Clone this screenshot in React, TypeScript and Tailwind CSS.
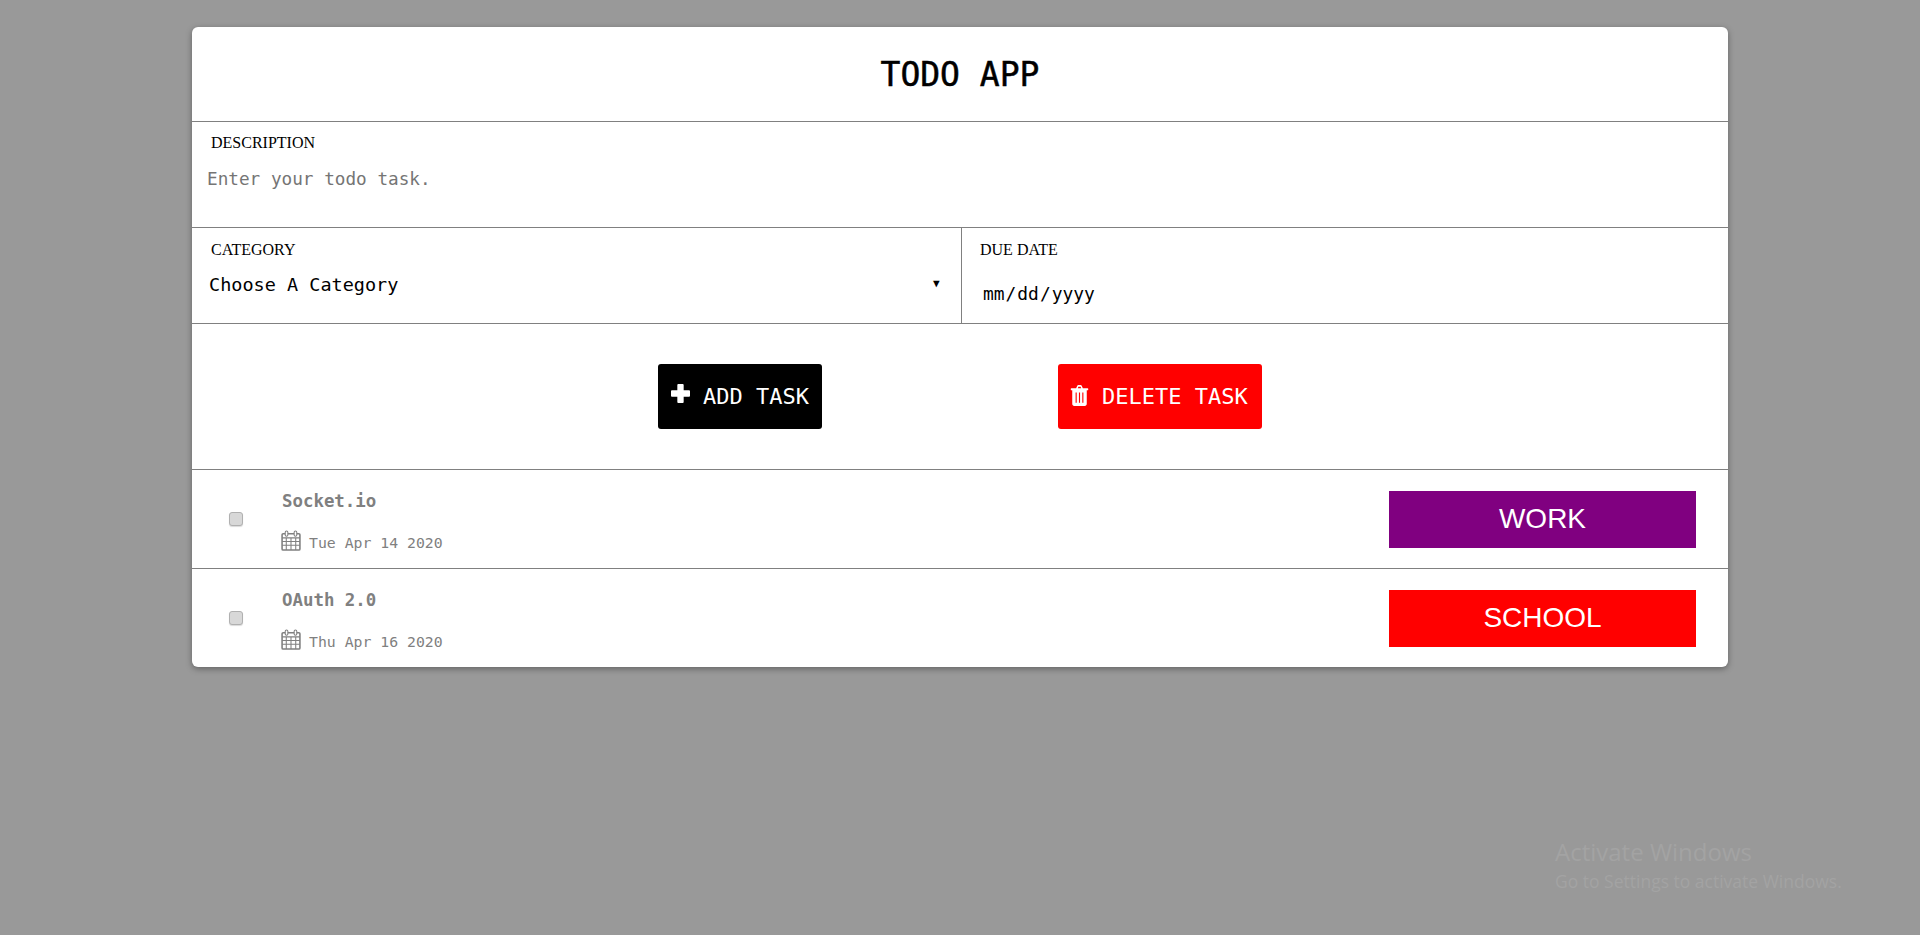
import React from "react";

function Plus() {
  return (
    <svg viewBox="0.8 0.8 14.4 14.4" className="w-[19px] h-[19px] shrink-0 mb-[6px]" fill="#fff">
      <path d="M6.300.8h3.400a.7.7 0 0 1 .7.7V5.600h4.100a.7.7 0 0 1 .7.7v3.400a.7.7 0 0 1-.7.7h-4.100v4.100a.7.7 0 0 1-.7.7H6.300a.7.7 0 0 1-.7-.7v-4.100H1.500a.7.7 0 0 1-.7-.7V6.300a.7.7 0 0 1 .7-.7h4.100V1.500A.7.7 0 0 1 6.300.8z" />
    </svg>
  );
}

function Trash() {
  return (
    <svg viewBox="0.2 0.7 15.6 18.8" className="w-[19px] h-[21px] shrink-0 mb-[2px]" fill="#fff">
      <path fillRule="evenodd" d="M5 3.500 6 1.300C6.200.9 6.500.7 7 .7h2c.5 0 .8.2 1 .6l1 2.200h4.300c.3 0 .5.2.5.5v1c0 .3-.2.5-.5.5H14.500V17.500c0 1.200-.8 2-1.700 2H3.200c-.9 0-1.700-.8-1.700-2V5.500H.7c-.3 0-.5-.2-.5-.5V4c0-.3.2-.5.500-.5zM6.500 3.500h3L9 2.200H7zM4.500 7.500v9h1v-9zM7.500 7.500v9h1v-9zM10.500 7.500v9h1v-9z" />
    </svg>
  );
}

function Calendar() {
  return (
    <svg viewBox="0 0 19 20" className="w-[20px] h-[21px] shrink-0 -ml-[1px] -mt-[1px]" fill="none" stroke="#808080">
      <rect x="1" y="3.500" width="17" height="15.500" rx="1" strokeWidth="1.500" />
      <path d="M1 7.500h17M1 11h17M1 14.500h17M5 7.500V19M9.500 7.500V19M14 7.500V19" strokeWidth="1" />
      <rect x="4" y="1" width="2.500" height="5" rx="1.200" fill="#ffffff" strokeWidth="1" />
      <rect x="12.500" y="1" width="2.500" height="5" rx="1.200" fill="#ffffff" strokeWidth="1" />
    </svg>
  );
}

function Task({ title, date, tag, color }: { title: string; date: string; tag: string; color: string }) {
  return (
    <div className="flex items-center h-[99px] border-t border-[#808080] relative">
      <div className="w-[90px] pr-[3px] flex justify-center shrink-0">
        <input type="checkbox" className="appearance-none w-[14px] h-[14px] rounded-[3px] border border-[#b0b0b0] bg-[#d8d8d8] shadow-[0_1px_1px_rgba(0,0,0,0.15)]" />
      </div>
      <div className="flex-1 flex flex-col text-[#808080] h-full pt-[21px]">
        <div className="font-bold text-[17.400px] leading-[20px]">{title}</div>
        <div className="flex items-start gap-[8px] mt-[20px] text-[14.800px] leading-[20px]">
          <Calendar />
          <span className="mt-[2px]">{date}</span>
        </div>
      </div>
      <div
        className={`w-[307px] h-[57px] mr-[32px] flex items-center justify-center text-white text-[28px] font-['Liberation_Sans',Arial,sans-serif] ${color}`}
      >
        {tag}
      </div>
    </div>
  );
}

export default function App() {
  return (
    <div className="min-h-[935px] bg-[#999999] pt-[27px] relative font-['DejaVu_Sans_Mono',monospace]">
      <div className="w-[1536px] mx-auto bg-white rounded-[6px] shadow-[0_2px_6px_rgba(0,0,0,0.35)] overflow-hidden">
        <h1 className="h-[94px] pt-[2px] flex items-center justify-center text-[33px] font-normal text-black [-webkit-text-stroke:0.5px_black]">
          TODO APP
        </h1>
        <div className="h-[106px] border-t border-[#808080] flex flex-col">
          <label className="pl-[19px] pt-[12px] text-[16px] leading-[18px] text-black font-['Liberation_Serif',serif]">
            DESCRIPTION
          </label>
          <input
            placeholder="Enter your todo task."
            className="pl-[15px] mt-[15px] h-[24px] text-[17.700px] outline-none placeholder:text-[#757575]"
          />
        </div>
        <div className="h-[96px] border-t border-[#808080] flex">
          <div className="w-[770px] border-r border-[#808080] flex flex-col relative">
            <label className="pl-[19px] pt-[13px] text-[16px] leading-[18px] text-black font-['Liberation_Serif',serif]">
              CATEGORY
            </label>
            <select className="appearance-none ml-[17px] mt-[12px] h-[24px] text-[18.500px] text-black outline-none bg-transparent">
              <option>Choose A Category</option>
            </select>
            <span className="absolute left-[741px] top-[50px] text-[11px] leading-[12px] text-black">▼</span>
          </div>
          <div className="flex-1 flex flex-col">
            <label className="pl-[18px] pt-[13px] text-[16px] leading-[18px] text-black font-['Liberation_Serif',serif]">
              DUE DATE
            </label>
            <div className="ml-[20px] mt-[23px] h-[24px] text-[17.900px] text-black leading-[24px]">
              <input
                type="date"
                className="outline-none w-[300px] [&::-webkit-calendar-picker-indicator]:hidden"
              />
            </div>
          </div>
        </div>
        <div className="h-[146px] border-t border-[#808080] flex items-start pt-[40px]">
          <button className="ml-[466px] w-[164px] h-[65px] pl-[13px] bg-black rounded-[3px] text-white text-[22px] flex items-center gap-[13px]">
            <Plus />
            <span>ADD TASK</span>
          </button>
          <button className="ml-[236px] w-[204px] h-[65px] pl-[12px] bg-[#ff0000] rounded-[3px] text-white text-[22px] flex items-center gap-[13px]">
            <Trash />
            <span>DELETE TASK</span>
          </button>
        </div>
        <Task title="Socket.io" date="Tue Apr 14 2020" tag="WORK" color="bg-[#800080]" />
        <Task title="OAuth 2.0" date="Thu Apr 16 2020" tag="SCHOOL" color="bg-[#ff0000]" />
      </div>
      <div className="absolute left-[1555px] top-[838px] text-[#a3a3a3] font-['Open_Sans',sans-serif]">
        <div className="text-[24px] leading-[28px]">Activate Windows</div>
        <div className="text-[17.500px] leading-[30px]">Go to Settings to activate Windows.</div>
      </div>
    </div>
  );
}
